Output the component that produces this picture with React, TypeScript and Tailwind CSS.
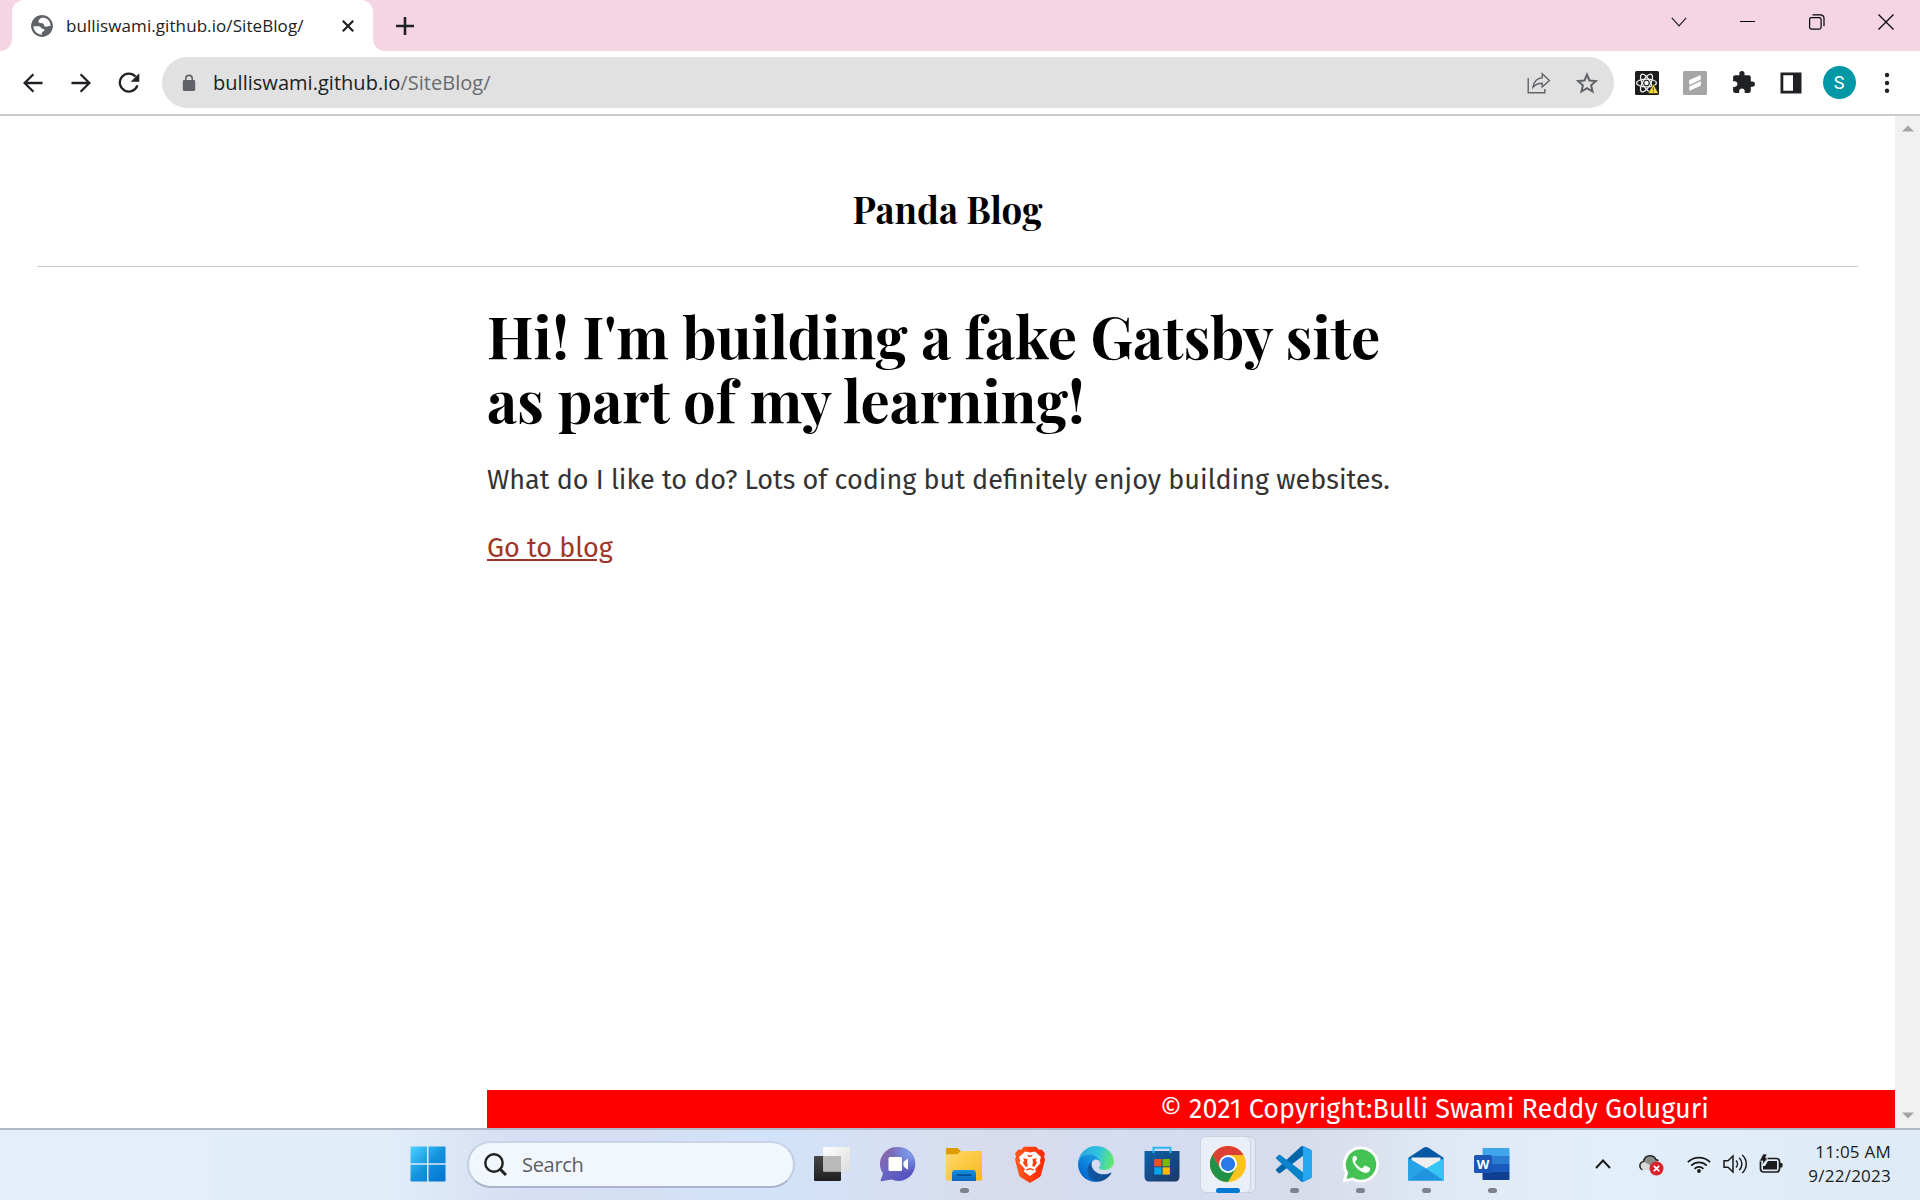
import type { ReactNode } from "react";

const ink = "#202124";

function GlobeIcon() {
  return (
    <svg width="22" height="22" viewBox="0 0 22 22">
      <circle cx="11" cy="11" r="10.7" fill="#5f6368" />
      <path d="M12 2.6C9.500 3 7 5.200 7.600 7.200 8.200 8.700 11 7.600 12.400 8.800 13.600 10 12.600 11.400 14.600 11.700 16.600 12 17.600 10.600 19.700 10.900 19.600 6.500 16.200 2.700 12 2.600Z" fill="#fff" />
      <path d="M2.300 11.300 8 11.300C9.800 11.600 9.800 13.500 11.500 13.700 13.800 14 14 16 12 16.600 10.800 17 11 18.400 10.600 19.700 6 19.500 2.400 15.700 2.300 11.300Z" fill="#fff" />
      <circle cx="11" cy="11" r="9.9" fill="none" stroke="#5f6368" strokeWidth="1.7" />
    </svg>
  );
}

function Arrow({ flip = false }: { flip?: boolean }) {
  return (
    <svg width="20" height="20" viewBox="0 0 20 20" className={flip ? "rotate-180" : ""} fill="none" stroke={ink} strokeWidth="2.3">
      <path d="M19.5 10H1.8M10.4 1.2 1.6 10l8.8 8.8" />
    </svg>
  );
}

function ReloadIcon() {
  return (
    <svg width="22" height="22" viewBox="0 0 22 22">
      <path d="M17.6 4.6 A9 9 0 1 0 19.4 13.4" fill="none" stroke={ink} strokeWidth="2.3" />
      <path d="M21.3 1.2v8.6h-8.6z" fill={ink} />
    </svg>
  );
}

function LockIcon() {
  return (
    <svg width="14" height="18" viewBox="0 0 14 18">
      <rect x="0.8" y="6" width="12.4" height="11" rx="1.4" fill="#5f6368" />
      <path d="M3.8 7V4.6a3.2 3.2 0 0 1 6.4 0V7" fill="none" stroke="#5f6368" strokeWidth="1.6" />
    </svg>
  );
}

function ShareIcon() {
  return (
    <svg width="24" height="22" viewBox="0 0 24 22" fill="none" stroke="#5f6368" strokeWidth="1.4">
      <path d="M1.2 6v14.8h16.6V17" />
      <path d="M15.2 1.8 22.4 8.6 15.2 15v-3.8C11 11.2 8.4 12.4 6 15.2 6.8 9.8 9.6 6.2 15.2 5.7Z" />
    </svg>
  );
}

function StarIcon() {
  return (
    <svg width="22" height="22" viewBox="0 0 22 22">
      <path d="m11 2.6 2.5 5.9 6.4.6-4.8 4.2 1.4 6.2L11 16.2l-5.5 3.3 1.4-6.2L2.1 9.1l6.4-.6z" fill="none" stroke="#5f6368" strokeWidth="2" />
    </svg>
  );
}

function ReactExtIcon() {
  return (
    <svg width="24" height="24" viewBox="0 0 24 24">
      <rect width="24" height="24" rx="1.5" fill="#1c1c1c" />
      <g fill="none" stroke="#f2f2f2" strokeWidth="1.3">
        <ellipse cx="11.5" cy="12" rx="10" ry="3.9" />
        <ellipse cx="11.5" cy="12" rx="10" ry="3.9" transform="rotate(60 11.5 12)" />
        <ellipse cx="11.5" cy="12" rx="10" ry="3.9" transform="rotate(120 11.5 12)" />
      </g>
      <circle cx="11.5" cy="12" r="2.2" fill="#fff" />
      <path d="M18.3 13 23.6 22.500H13z" fill="#f7e02e" stroke="#1c1c1c" strokeWidth="0.6" />
      <path d="M18.300 16.500v2.800M18.300 20.200v1" stroke="#444" strokeWidth="1.100" />
    </svg>
  );
}

function SlashExtIcon() {
  return (
    <svg width="24" height="24" viewBox="0 0 24 24">
      <rect width="24" height="24" rx="1.5" fill="#a6a6a6" />
      <path d="M6.500 9.500 17.200 4.700v3.600L6.800 13.300zM6.800 15.700 17.400 10.700v3.600L6.800 19.200z" fill="#fff" stroke="#fff" strokeLinejoin="round" />
    </svg>
  );
}

function PuzzleIcon() {
  return (
    <svg width="25" height="25" viewBox="0 0 24 24">
      <path fill={ink} d="M20.5 11H19V7c0-1.100-.9-2-2-2h-4V3.500a2.500 2.500 0 0 0-5 0V5H4c-1.100 0-1.990.9-1.990 2v3.800H3.500c1.490 0 2.700 1.210 2.700 2.700s-1.210 2.700-2.700 2.700H2V20c0 1.100.9 2 2 2h3.800v-1.500c0-1.490 1.210-2.700 2.700-2.700s2.700 1.210 2.700 2.700V22H17c1.100 0 2-.9 2-2v-4h1.500a2.500 2.500 0 0 0 0-5" />
    </svg>
  );
}

function PanelIcon() {
  return (
    <svg width="22" height="22" viewBox="0 0 22 22">
      <path d="M.5.5h21v21H.5zM3.300 3.300v15.400H13V3.300z" fill={ink} fillRule="evenodd" />
    </svg>
  );
}

function DotsIcon() {
  return (
    <svg width="6" height="22" viewBox="0 0 6 22" fill={ink}>
      <circle cx="3" cy="3" r="2.2" />
      <circle cx="3" cy="11" r="2.2" />
      <circle cx="3" cy="18.7" r="2.2" />
    </svg>
  );
}

function WindowsIcon() {
  return (
    <svg width="36" height="36" viewBox="0 0 36 36">
      <defs>
        <linearGradient id="win" x1="0" y1="0" x2="36" y2="36" gradientUnits="userSpaceOnUse">
          <stop offset="0" stopColor="#4fd3ff" />
          <stop offset="0.5" stopColor="#1494df" />
          <stop offset="1" stopColor="#0070cc" />
        </linearGradient>
      </defs>
      <path fill="url(#win)" d="M1.5.5H17v16.700H.5V1.500a1 1 0 0 1 1-1M18.500.5h16a1 1 0 0 1 1 1v15.700h-17zM.5 18.700H17v16.800H1.500a1 1 0 0 1-1-1zM18.500 18.700h17v15.800a1 1 0 0 1-1 1h-16z" />
    </svg>
  );
}

function TaskViewIcon() {
  return (
    <svg width="36" height="36" viewBox="0 0 36 36">
      <defs>
        <linearGradient id="tv" x1="0" y1="0" x2="0" y2="1">
          <stop offset="0" stopColor="#474747" />
          <stop offset="1" stopColor="#1f1f1f" />
        </linearGradient>
        <linearGradient id="tv2" x1="0" y1="0" x2="1" y2="1">
          <stop offset="0" stopColor="#ffffff" />
          <stop offset="1" stopColor="#dcdcdc" />
        </linearGradient>
      </defs>
      <rect x="0" y="10" width="27" height="25" rx="1.2" fill="url(#tv)" />
      <rect x="9" y="1" width="27" height="24.5" rx="1" fill="url(#tv2)" />
      <path d="M9 10h18v15.500H10a1 1 0 0 1-1-1z" fill="#b9b9b9" />
    </svg>
  );
}

function ChatIcon() {
  return (
    <svg width="36" height="36" viewBox="0 0 36 36">
      <defs>
        <linearGradient id="chat" x1="4" y1="6" x2="30" y2="32" gradientUnits="userSpaceOnUse">
          <stop offset="0" stopColor="#8a6aa8" />
          <stop offset="0.4" stopColor="#6a67c4" />
          <stop offset="1" stopColor="#5250bd" />
        </linearGradient>
        <radialGradient id="chat2" cx="0.9" cy="0.15" r="0.6">
          <stop offset="0" stopColor="#82a5f2" />
          <stop offset="1" stopColor="#82a5f2" stopOpacity="0" />
        </radialGradient>
      </defs>
      <path d="M18 1a17 17 0 1 1-6.500 32.600L1.500 35.200a.9.9 0 0 1-.8-1.300L3 27.500A17 17 0 0 1 18 1" fill="url(#chat)" />
      <circle cx="18" cy="18" r="17" fill="url(#chat2)" />
      <rect x="8.5" y="11" width="13.5" height="14" rx="1.5" fill="#fff" />
      <path d="M24 16 27.500 13.300v9.700L24 20.300z" fill="#fff" stroke="#fff" strokeLinejoin="round" />
    </svg>
  );
}

function FolderIcon() {
  return (
    <svg width="36" height="36" viewBox="0 0 36 36">
      <defs>
        <linearGradient id="fold" x1="0" y1="0" x2="1" y2="1">
          <stop offset="0" stopColor="#ffdb6b" />
          <stop offset="1" stopColor="#f7b619" />
        </linearGradient>
        <linearGradient id="fold2" x1="0" y1="0" x2="0" y2="1">
          <stop offset="0" stopColor="#1490df" />
          <stop offset="1" stopColor="#0765bd" />
        </linearGradient>
      </defs>
      <path d="M0 3a1 1 0 0 1 1-1h10.500l3.500 3.200V10H0z" fill="#dd9b00" />
      <path d="M0 8.200h11L15 5h20a1 1 0 0 1 1 1v28.500H0z" fill="url(#fold)" />
      <path d="M6 35v-7.500a3.500 3.500 0 0 1 3.500-3.500h17a3.500 3.500 0 0 1 3.500 3.500V35z" fill="url(#fold2)" />
      <rect x="10.5" y="28.3" width="15" height="1.6" rx="0.8" fill="#064f98" />
    </svg>
  );
}

function BraveIcon() {
  return (
    <svg width="32" height="37" viewBox="0 0 32 37">
      <defs>
        <linearGradient id="brave" x1="0" y1="0" x2="1" y2="0">
          <stop offset="0" stopColor="#ff5a1f" />
          <stop offset="1" stopColor="#ff2400" />
        </linearGradient>
      </defs>
      <path d="M10 .8h12l2.800 3 3-.3L31 7.500l-1 3 1 3-4 15.500a5 5 0 0 1-2 2.600L16 37l-9-5.400A5 5 0 0 1 5 29L1 13.500l1-3-1-3L4.200 3.500l3 .3z" fill="url(#brave)" />
      <path d="M16 6.400 21 5.500 27 11l-1.200 3.500.8 2.500-5.500 6 1 2.500L16 30l-6.100-4.500 1-2.500-5.500-6 .8-2.500L5 11l6-5.500z" fill="#fff" />
      <path d="M9 12.300 13.600 13 13 16l.8 4-2 1-3-4.500 1.500-1.800zM23 12.300 18.400 13l.6 3-.8 4 2 1 3-4.500-1.500-1.800zM12 23.200 16 22l4 1.200-.3 1.300-3.700-1-3.700 1zM13 8.600l3 1 3-1-1.800 2.400h-2.400z" fill="#ff4012" />
    </svg>
  );
}

function EdgeIcon() {
  return (
    <svg width="36" height="36" viewBox="0 0 256 256">
      <defs>
        <linearGradient id="ea" x1="63" y1="177" x2="241" y2="177" gradientUnits="userSpaceOnUse">
          <stop offset="0" stopColor="#0c59a4" />
          <stop offset="1" stopColor="#114a8b" />
        </linearGradient>
        <linearGradient id="eb" x1="152" y1="96" x2="45" y2="220" gradientUnits="userSpaceOnUse">
          <stop offset="0" stopColor="#1b9de2" />
          <stop offset="0.6" stopColor="#0c7fdb" />
          <stop offset="1" stopColor="#0667ce" />
        </linearGradient>
        <linearGradient id="ec" x1="10" y1="60" x2="250" y2="120" gradientUnits="userSpaceOnUse">
          <stop offset="0" stopColor="#2aa9de" />
          <stop offset="0.5" stopColor="#2fc2df" />
          <stop offset="1" stopColor="#66eb6e" />
        </linearGradient>
      </defs>
      <path fill="url(#ea)" d="M231 190.500c-3.400 1.800-6.900 3.400-10.500 4.700a101.900 101.900 0 0 1-35.900 6.500c-47.300 0-88.500-32.500-88.500-74.300.1-11.400 6.400-21.900 16.400-27.300-42.800 1.800-53.800 46.400-53.800 72.500 0 74 68.100 81.400 82.800 81.400 7.900 0 19.800-2.300 27-4.600l1.300-.4a128.300 128.300 0 0 0 66.600-52.800c1.200-1.900.6-4.300-1.200-5.500-1.300-.8-2.900-.9-4.200-.2z" />
      <path fill="url(#eb)" d="M105.700 241.400a79.200 79.200 0 0 1-22.700-21.300 80.700 80.700 0 0 1 29.500-120c3.200-1.500 8.400-4.100 15.500-4 10.100.1 19.600 4.900 25.700 13 4 5.400 6.300 11.900 6.400 18.700 0-.2 24.500-79.600-80-79.600-43.900 0-80 41.700-80 78.200-.2 19.300 4 38.500 12.100 56a128.200 128.200 0 0 0 156.400 67.100 75.600 75.600 0 0 1-62.800-8z" />
      <path fill="url(#ec)" d="M152.300 148.900c-.9 1-3.400 2.500-3.400 5.600 0 2.600 1.700 5.200 4.800 7.300 14.300 10 41.400 8.700 41.500 8.700 10.700 0 21.100-2.900 30.300-8.300A61.400 61.400 0 0 0 256 109.200c.3-22.400-8-37.300-11.300-43.900C223.500 23.900 177.700 0 128 0A128 128 0 0 0 0 126.200c.5-36.500 36.800-66 80-66 3.500 0 23.500.3 42 10.100 16.300 8.600 24.900 18.900 30.800 29.200 6.200 10.700 7.300 24.100 7.300 29.500 0 5.300-2.700 13.300-7.800 19.900z" />
    </svg>
  );
}

function StoreIcon() {
  return (
    <svg width="36" height="36" viewBox="0 0 36 36">
      <defs>
        <linearGradient id="store" x1="0" y1="0" x2="1" y2="1">
          <stop offset="0" stopColor="#0b62ac" />
          <stop offset="1" stopColor="#1e3762" />
        </linearGradient>
      </defs>
      <path d="M.5 5h35v26a4.500 4.500 0 0 1-4.500 4.500H5A4.500 4.500 0 0 1 .5 31z" fill="url(#store)" />
      <path d="M9.500 7V1.800h17V7" fill="none" stroke="#29b6f0" strokeWidth="2" />
      <path d="M10.200 13h7.300v7.300h-7.300z" fill="#f25022" />
      <path d="M18.600 13h7.300v7.300h-7.300z" fill="#7fba00" />
      <path d="M10.200 21.300h7.300v7.300h-7.300z" fill="#00a4ef" />
      <path d="M18.600 21.300h7.300v7.300h-7.300z" fill="#ffb900" />
    </svg>
  );
}

function ChromeIcon() {
  return (
    <svg width="36" height="36" viewBox="0 0 48 48">
      <circle cx="24" cy="24" r="24" fill="#fcc31e" />
      <path d="M3.200 12A24 24 0 0 1 44.800 12L24 12 13.600 30z" fill="#dd4035" />
      <path d="M3.200 12A24 24 0 0 0 24 48L34.400 30 24 24 13.600 30z" fill="#219148" />
      <circle cx="24" cy="24" r="12" fill="#fff" />
      <circle cx="24" cy="24" r="9.5" fill="#2a78ea" />
    </svg>
  );
}

function VSCodeIcon() {
  return (
    <svg width="36" height="36" viewBox="0 0 100 100">
      <path d="M96.500 10.700 75.900.8a6.200 6.200 0 0 0-7.100 1.200L1.300 63.600a4.200 4.200 0 0 0 0 6.100l5.500 5a4.200 4.200 0 0 0 5.300.2L93.400 13.200A4.100 4.100 0 0 1 100 16.500v-.2a6.200 6.200 0 0 0-3.500-5.600" fill="#0065a9" />
      <path d="M96.500 89.300 75.900 99.200a6.200 6.200 0 0 1-7.100-1.200L1.300 36.400a4.200 4.200 0 0 1 0-6.100l5.500-5a4.200 4.200 0 0 1 5.300-.2l81.300 61.700a4.100 4.100 0 0 0 6.600-3.300v.2a6.200 6.200 0 0 1-3.500 5.600" fill="#0a83cb" />
      <path d="M75.900 99.200a6.200 6.200 0 0 1-7.100-1.200c2.300 2.300 6.200.7 6.200-2.600V4.700c0-3.300-3.900-4.900-6.200-2.600A6.200 6.200 0 0 1 75.900.8l20.600 9.900a6.200 6.200 0 0 1 3.500 5.600v67.400a6.200 6.200 0 0 1-3.500 5.600z" fill="#24a6f1" />
    </svg>
  );
}

function WhatsAppIcon() {
  return (
    <svg width="37" height="37" viewBox="0 0 37 37">
      <path d="M19 .5A18 18 0 1 1 10.500 34.400L.7 36.600 3 27A18 18 0 0 1 19 .5" fill="#fff" />
      <path d="M19 3.300A15.200 15.200 0 1 1 11 31.400L4.500 33 6.200 26.600A15.200 15.200 0 0 1 19 3.300" fill="#45c254" />
      <path d="M14.200 10.500c-.4-.9-.9-.9-1.500-.8-1.500.3-2.400 2-2.300 3.900.3 5.300 7 13 13.100 13.300 2.800.1 4.700-2 4.600-4.200 0-.6-.3-.8-.8-1.100l-3.700-1.800c-.6-.3-1-.2-1.400.3l-1.500 1.900c-.3.4-.7.4-1.200.2-2.900-1.200-5-3.300-6.300-5.700-.3-.4-.1-.8.1-1.100l1.200-1.500c.9-.8.800-1.100.5-1.800z" fill="#fff" />
    </svg>
  );
}

function MailIcon() {
  return (
    <svg width="36" height="36" viewBox="0 0 36 36">
      <path d="M0 12 15.500 1.800a4.500 4.500 0 0 1 5 0L36 12v8H0z" fill="#0858a6" />
      <path d="M3.500 11.500h29V22h-29z" fill="#efefef" />
      <path d="M0 12 18 22.500 36 34.500H0z" fill="#25a3e6" />
      <path d="M36 12v22.500L18 22.500z" fill="#35c4f3" />
      <path d="M18 22.500 36 34.500H0z" fill="#1f93de" />
      <path d="M0 12v22.500l18-12z" fill="#27a4e7" />
    </svg>
  );
}

function WordIcon() {
  return (
    <svg width="36" height="36" viewBox="0 0 36 36">
      <path d="M9.500 2h25a1 1 0 0 1 1 1v8H8.500V3a1 1 0 0 1 1-1" fill="#41a5ee" />
      <path d="M8.500 10h27v8h-27z" fill="#2b7cd3" />
      <path d="M8.500 18h27v8h-27z" fill="#185abd" />
      <path d="M8.500 26h27v7a1 1 0 0 1-1 1h-25a1 1 0 0 1-1-1z" fill="#103f91" />
      <rect x="0" y="9" width="18" height="18" rx="1.5" fill="#1a56b8" />
      <text x="9" y="23" textAnchor="middle" fontFamily="Open Sans, sans-serif" fontWeight="700" fontSize="13" fill="#fff">W</text>
    </svg>
  );
}

const apps: { name: string; icon: ReactNode; running?: boolean; active?: boolean }[] = [
  { name: "Task view", icon: <TaskViewIcon /> },
  { name: "Chat", icon: <ChatIcon /> },
  { name: "Explorer", icon: <FolderIcon />, running: true },
  { name: "Brave", icon: <BraveIcon /> },
  { name: "Edge", icon: <EdgeIcon /> },
  { name: "Store", icon: <StoreIcon /> },
  { name: "Chrome", icon: <ChromeIcon />, active: true },
  { name: "Code", icon: <VSCodeIcon />, running: true },
  { name: "WhatsApp", icon: <WhatsAppIcon />, running: true },
  { name: "Mail", icon: <MailIcon />, running: true },
  { name: "Word", icon: <WordIcon />, running: true },
];

function TabStrip() {
  return (
    <div className="flex h-[51px] bg-[#f5d4e3]">
      <div className="w-3 bg-white">
        <div className="h-full w-3 rounded-br-xl bg-[#f5d4e3]" />
      </div>
      <div className="flex w-[361px] items-center rounded-t-xl bg-white pl-[19px] pr-[19px]">
        <GlobeIcon />
        <span className="ml-[13px] flex-1 whitespace-nowrap font-['Segoe_UI','Open_Sans','Noto_Sans',sans-serif] text-[17px] leading-6 tracking-[0.08px] text-[#202124]">bulliswami.github.io/SiteBlog/</span>
        <svg width="12" height="12" viewBox="0 0 12 12" stroke={ink} strokeWidth="2.2"><path d="M.8.8l10.400 10.400M11.200.8.8 11.200" /></svg>
      </div>
      <div className="w-3 bg-white"><div className="h-full rounded-bl-xl bg-[#f5d4e3]" /></div>
      <div className="flex w-[40px] items-center justify-center">
        <svg width="18" height="18" viewBox="0 0 18 18" stroke={ink} strokeWidth="2.600"><path d="M9 0v18M0 9h18" /></svg>
      </div>
      <div className="ml-auto flex h-[43px] items-center">
        <div className="flex w-[69px] justify-center"><svg width="16" height="10" viewBox="0 0 16 10" fill="none" stroke="#222" strokeWidth="1.2"><path d="M.8.8 8 8.800 15.200.8" /></svg></div>
        <div className="flex w-[69px] justify-center"><div className="h-px w-[15px] bg-black" /></div>
        <div className="flex w-[69px] justify-center">
          <svg width="16" height="16" viewBox="0 0 16 16" fill="none" stroke="#000" strokeWidth="1.2"><rect x=".6" y="3.600" width="11.500" height="11.500" rx="1.800" /><path d="M3.500.8h8A3.400 3.400 0 0 1 15 4.200v8" /></svg>
        </div>
        <div className="flex w-[69px] justify-center"><svg width="16" height="16" viewBox="0 0 16 16" stroke="#000" strokeWidth="1.2"><path d="M.5.5l15 15M15.500.5l-15 15" /></svg></div>
      </div>
    </div>
  );
}

function Cell({ children }: { children: ReactNode }) {
  return <div className="flex w-12 shrink-0 items-center justify-center">{children}</div>;
}

function Toolbar() {
  return (
    <div className="flex h-[65px] items-center border-b-2 border-[#cbcbcb] bg-white px-[9px]">
      <Cell><Arrow /></Cell>
      <Cell><Arrow flip /></Cell>
      <Cell><ReloadIcon /></Cell>
      <div className="mx-[9px] flex h-[51px] flex-1 items-center rounded-full bg-[#e1e1e1] pl-5 pr-[3px]">
        <LockIcon />
        <span className="ml-[17px] flex-1 whitespace-nowrap font-['Segoe_UI','Open_Sans','Noto_Sans',sans-serif] text-[20px] leading-6 tracking-[0.03px] text-[#202124]">bulliswami.github.io<span className="text-[#686b6f]">/SiteBlog/</span></span>
        <Cell><ShareIcon /></Cell>
        <Cell><StarIcon /></Cell>
      </div>
      <Cell><ReactExtIcon /></Cell>
      <Cell><SlashExtIcon /></Cell>
      <Cell><PuzzleIcon /></Cell>
      <Cell><PanelIcon /></Cell>
      <Cell>
        <div className="flex size-[33px] items-center justify-center rounded-full bg-[#0097a7] font-[Roboto,sans-serif] text-[18px] text-white">S</div>
      </Cell>
      <Cell><DotsIcon /></Cell>
    </div>
  );
}

function BlogPage() {
  return (
    <div className="flex h-[1012px] bg-white">
      <main className="flex flex-1 flex-col">
        <header className="mx-[37px] h-[151px] border-b border-[#ccc] pt-[68px] text-center">
          <h3 className="whitespace-nowrap font-['Playfair_Display','Liberation_Serif',serif] text-[36.6px] font-bold leading-[50px] text-black">Panda Blog</h3>
        </header>
        <div className="ml-[487px] flex-1 pt-9">
          <h1 className="w-[920px] font-['Playfair_Display','Liberation_Serif',serif] text-[58.05px] font-bold leading-[64px] text-black">
            Hi! I'm building a fake Gatsby site as part of my learning!
          </h1>
          <p className="mt-7 whitespace-nowrap font-['Fira_Sans','Noto_Sans',sans-serif] text-[27px] leading-[43px] text-[#333]">What do I like to do? Lots of coding but definitely enjoy building websites.</p>
          <p className="mt-[25px] whitespace-nowrap font-['Fira_Sans','Noto_Sans',sans-serif] text-[27px] leading-[43px] text-[#9d372b]">
            <a className="underline decoration-2 underline-offset-2">Go to blog</a>
          </p>
        </div>
        <footer className="ml-[487px] h-[38px] whitespace-nowrap bg-[#ff0000] pl-[673px] font-['Fira_Sans','Noto_Sans',sans-serif] text-[27px] leading-[38px] text-white">© 2021 Copyright:Bulli Swami Reddy Goluguri</footer>
      </main>
      <div className="flex w-[25px] flex-col items-center justify-between bg-[#f1f1f1] py-[9px]">
        <svg width="12" height="7" viewBox="0 0 12 7"><path d="M0 6.500 6 .5l6 6z" fill="#a3a3a3" /></svg>
        <svg width="12" height="7" viewBox="0 0 12 7"><path d="M0 .5l6 6 6-6z" fill="#a3a3a3" /></svg>
      </div>
    </div>
  );
}

function Taskbar() {
  return (
    <div className="flex h-[72px] border-t-2 border-[#b0b8c8] bg-[linear-gradient(90deg,#e3eef8_0%,#e1edf9_20%,#d6dff3_27%,#d5dff3_33%,#d2e3f9_40%,#d6dff3_46%,#d7dcec_52%,#d5dcf2_60%,#d7dcea_68%,#e0eaf4_76%,#e2eef9_84%,#deeaf6_100%)]">
      <div className="ml-[410px] mt-4 w-9"><WindowsIcon /></div>
      <div className="ml-[21px] mt-[11px] flex h-[47px] w-[328px] items-center rounded-full border-2 border-b-[#a9b5cc] border-l-[#c3cde0] border-r-[#c3cde0] border-t-[#c9d4e8] bg-[#f2f6fd] pl-[15px]">
        <svg width="23" height="23" viewBox="0 0 23 23" fill="none" stroke="#222" strokeWidth="2.4"><circle cx="10" cy="10" r="8.7" /><path d="m16 16 6 6" strokeWidth="3" /></svg>
        <span className="ml-[15px] font-['Segoe_UI','Open_Sans','Noto_Sans',sans-serif] text-[20px] leading-6 tracking-[-0.3px] text-[#5c5e63]">Search</span>
      </div>
      <div className="ml-1 flex">
        {apps.map((a) => (
          <div key={a.name} className="relative flex w-[66px] flex-col items-center pt-[15px]">
            {a.active && <div className="absolute left-[12px] top-[6px] h-[57px] w-[49px] rounded-md border border-[#c6cddd] bg-[#e3e8f4]" />}
            {a.active && <div className="absolute left-[5px] top-[6px] h-[57px] w-[51px] rounded-md border border-[#cdd2e0] bg-[#ebeff8]" />}
            <div className="relative flex h-[38px] items-center">{a.icon}</div>
            {a.running && <div className="mt-[5px] h-[5px] w-[9px] rounded-full bg-[#7e828c]" />}
            {a.active && <div className="relative mt-[5px] h-[5px] w-6 rounded-full bg-[#0078d4]" />}
          </div>
        ))}
      </div>
      <div className="ml-auto flex h-[68px] items-center pr-[29px]">
        <svg width="16" height="10" viewBox="0 0 16 10" fill="none" stroke="#1b1b1b" strokeWidth="2" className="mr-7"><path d="M1 9l7-7.500L15 9" /></svg>
        <svg width="25" height="24" viewBox="0 0 25 24" className="mr-[23px]">
          <path d="M4 17.500C2 17 .9 15.500.9 13.700c0-2.200 1.500-3.700 3.500-4C5.200 6 7.700 3.800 11 3.800c2.700 0 4.800 1.300 5.900 3.700 1 .2 1.800.6 2.500 1.300" fill="#8d8d8d" stroke="#222" strokeWidth="1.500" />
          <path d="M1.700 13.600c0-2.600 2.700-4 5-2.800l6.800 3.500-2 3.600H5c-2 0-3.300-1.800-3.300-4.300" fill="#d8d8d8" />
          <circle cx="17.500" cy="16.500" r="7" fill="#d8232f" />
          <path d="m14.800 13.800 5.400 5.400m0-5.400-5.400 5.400" stroke="#fff" strokeWidth="1.700" />
        </svg>
        <svg width="24" height="18" viewBox="0 0 24 18" fill="none" stroke="#1b1b1b" strokeWidth="1.700" className="mr-3">
          <path d="M.8 7.200a15.800 15.800 0 0 1 22.400 0M4.200 10.700a11 11 0 0 1 15.600 0M7.500 13.800a6.300 6.300 0 0 1 9 0" />
          <circle cx="12" cy="16" r="1.900" fill="#1b1b1b" stroke="none" />
        </svg>
        <svg width="24" height="20" viewBox="0 0 24 20" fill="none" stroke="#1b1b1b" strokeWidth="1.500" className="mr-3">
          <path d="M1 6.800h4L10 2v16l-5-4.800H1zM13 6.500a5 5 0 0 1 0 7M16.200 3.800a8.500 8.500 0 0 1 0 12.400M19.200 1a12 12 0 0 1 0 18" />
        </svg>
        <svg width="24" height="20" viewBox="0 0 24 20" className="mr-[25px]">
          <rect x="1.500" y="4.500" width="19" height="13.500" rx="3" fill="none" stroke="#1b1b1b" strokeWidth="1.700" />
          <path d="M9 7h9v8.500H4V12h2z" fill="#1b1b1b" />
          <path d="M21 9h1.500a1 1 0 0 1 1 1v2.500a1 1 0 0 1-1 1H21z" fill="#1b1b1b" />
          <path d="M4 0h4L6.500 4H9L3 11.500 4 7H.5z" fill="#1b1b1b" stroke="#e1edf8" strokeWidth="0.7" />
        </svg>
        <div className="flex flex-col items-end whitespace-nowrap font-['Segoe_UI','Open_Sans','Noto_Sans',sans-serif] text-[17px] leading-6 tracking-[0.24px] text-[#1b1b1b]">
          <span>11:05 AM</span>
          <span>9/22/2023</span>
        </div>
      </div>
    </div>
  );
}

export default function App() {
  return (
    <div className="h-[1200px] w-[1920px] overflow-hidden bg-white">
      <TabStrip />
      <Toolbar />
      <BlogPage />
      <Taskbar />
    </div>
  );
}
